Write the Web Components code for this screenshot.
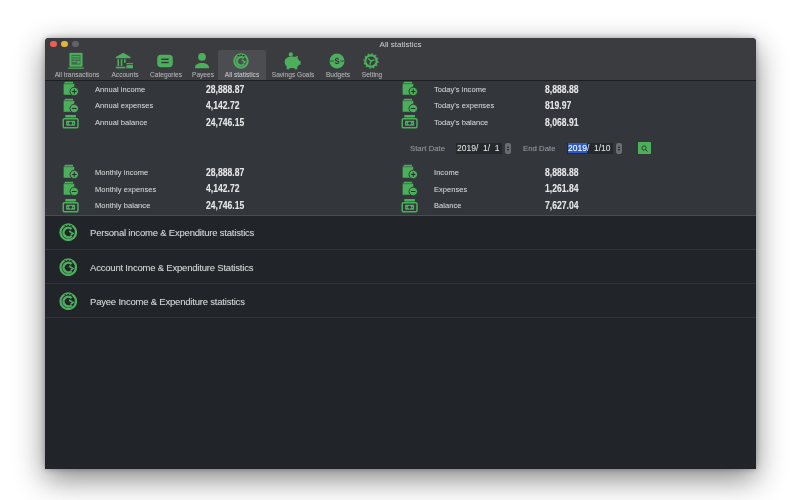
<!DOCTYPE html>
<html><head><meta charset="utf-8"><title>All statistics</title>
<style>
html,body{margin:0;height:100%;background:#fff;overflow:hidden}
body{box-sizing:border-box;padding:38px 44px 31px 45px;display:flex;font-family:"Liberation Sans",Arial,sans-serif}
x-window{flex:1}
</style></head><body>
<x-window>
  <x-toolbar slot="toolbar">
    <x-tool icon="ledger" w="48">All transactions</x-tool>
    <x-tool icon="bank" w="48">Accounts</x-tool>
    <x-tool icon="tag" w="34">Categories</x-tool>
    <x-tool icon="person" w="30" style="margin-left:5px">Payees</x-tool>
    <x-tool icon="stats" w="48" size="16" active>All statistics</x-tool>
    <x-tool icon="pig" w="54">Savings Goals</x-tool>
    <x-tool icon="budget" w="36" size="16">Budgets</x-tool>
    <x-tool icon="gear" w="32" size="16">Setting</x-tool>
  </x-toolbar>
  <x-stats slot="stats">
    <x-stat icon="plus" label="Annual income" value="28,888.87"></x-stat>
    <x-stat icon="plus" label="Today's income" value="8,888.88"></x-stat>
    <x-stat icon="minus" label="Annual expenses" value="4,142.72"></x-stat>
    <x-stat icon="minus" label="Today's expenses" value="819.97"></x-stat>
    <x-stat icon="cash" label="Annual balance" value="24,746.15"></x-stat>
    <x-stat icon="cash" label="Today's balance" value="8,068.91"></x-stat>
    <x-date-range></x-date-range>
    <x-stat icon="plus" label="Monthly income" value="28,888.87"></x-stat>
    <x-stat icon="plus" label="Income" value="8,888.88"></x-stat>
    <x-stat icon="minus" label="Monthly expenses" value="4,142.72"></x-stat>
    <x-stat icon="minus" label="Expenses" value="1,261.84"></x-stat>
    <x-stat icon="cash" label="Monthly balance" value="24,746.15"></x-stat>
    <x-stat icon="cash" label="Balance" value="7,627.04"></x-stat>
  </x-stats>
  <x-row>Personal income &amp; Expenditure statistics</x-row>
  <x-row>Account Income &amp; Expenditure Statistics</x-row>
  <x-row>Payee Income &amp; Expenditure statistics</x-row>
</x-window>
<script>
const G='#4caf5c', D='#33363a';
const ICONS={
 ledger:`<rect x="3" y="1" width="16" height="17" fill="${G}"/><rect x="5.500" y="3.500" width="11" height="12" fill="#3f6f4b"/><rect x="6.500" y="5" width="9" height="1.500" fill="${G}"/><rect x="6.500" y="8" width="9" height="1.200" fill="${G}"/><rect x="6.500" y="11" width="5" height="1.200" fill="${G}"/><rect x="12.500" y="11" width="3" height="3" fill="${G}"/><rect x="1.500" y="19" width="19" height="1.500" fill="${G}"/>`,
 bank:`<path d="M10 1 1 6v1.500h18V6z" fill="${G}"/><path d="M3 9h2v8H3zM7 9h2v8H7zM11 9h2v4h-2z" fill="${G}"/><rect x="1" y="18" width="12" height="2" fill="${G}"/><rect x="13.500" y="13" width="9" height="7.500" rx="1" fill="${G}" stroke="${D}" stroke-width=".8"/><rect x="13.500" y="15" width="9" height="1" fill="${D}"/>`,
 tag:`<rect x="1.500" y="3.500" width="19" height="15" rx="4.500" fill="${G}"/><rect x="6.500" y="8" width="9" height="1.700" fill="${D}"/><rect x="6.500" y="12" width="9" height="1.700" fill="${D}"/>`,
 person:`<circle cx="11" cy="6" r="4.700" fill="${G}"/><path d="M2.500 20v-1.500c0-3 3.500-5 8.500-5s8.500 2 8.500 5V20z" fill="${G}"/>`,
 stats:`<circle cx="11" cy="11" r="9.200" fill="none" stroke="${G}" stroke-width="2.800"/><path d="M15 15.500A5.700 5.700 0 1 1 15 7.300" fill="none" stroke="${G}" stroke-width="3"/><path d="M12 9.500 16.800 12.500 14 14.500" fill="none" stroke="${G}" stroke-width="1.800"/><ellipse cx="7.500" cy="3.400" rx="1.400" ry=".8" fill="#23272b"/><ellipse cx="11" cy="2.800" rx="1.400" ry=".8" fill="#23272b"/><ellipse cx="14.500" cy="3.400" rx="1.400" ry=".8" fill="#23272b"/>`,
 pig:`<path d="M2 12c0-4 4-6.500 9-6.500 1.500 0 2.500.2 3.500.6L18 4.500v3.800c1 .8 1.600 1.700 2 2.700h1.500v4.500H19.500c-.5 1-1.200 1.600-2 2.200V21h-3.500v-1.500H8V21H4.500v-3.500C3 16.500 2 14.500 2 12z" fill="${G}"/><circle cx="9.500" cy="3" r="2.600" fill="${G}"/>`,
 budget:`<circle cx="11" cy="11" r="10.300" fill="${G}"/><path d="M1 11h5.500M15.500 11h5.500" stroke="${D}" stroke-width="1.100"/><text x="11" y="15.500" text-anchor="middle" font-family="Liberation Sans" font-weight="700" font-size="12.500" fill="${D}">$</text>`,
 gear:`<circle cx="11" cy="11" r="7.800" fill="none" stroke="${G}" stroke-width="3"/><circle cx="11" cy="11" r="9.700" fill="none" stroke="${G}" stroke-width="1.600" stroke-dasharray="2.500 2.580"/><path d="M11 11l5-1.500M11 11 7 7.500M11 11l-1.500 5" stroke="${G}" stroke-width="2" fill="none"/>`,
 plus:`<path d="M2 4.500 4 2h9.500v2.500H15V12h-3v6H2z" fill="${G}"/><path d="M2 4.500h11.500" stroke="${D}" stroke-width=".6"/><circle cx="15" cy="14" r="5.200" fill="${G}" stroke="${D}" stroke-width="1.200"/><path d="M12.300 14h5.400M15 11.300v5.400" stroke="#26302a" stroke-width="1.300"/>`,
 minus:`<path d="M2 4.500 4 2h9.500v2.500H15V12h-3v6H2z" fill="${G}"/><path d="M2 4.500h11.500" stroke="${D}" stroke-width=".6"/><circle cx="15" cy="14" r="5.200" fill="${G}" stroke="${D}" stroke-width="1.200"/><path d="M12.300 14h5.400" stroke="#26302a" stroke-width="1.300"/>`,
 cash:`<path d="M4 2.500h13v3H4z" fill="${G}"/><rect x="1.500" y="7" width="18" height="11" rx="1.500" fill="none" stroke="${G}" stroke-width="1.800"/><rect x="5" y="9.500" width="11" height="6" fill="${G}"/><circle cx="10.500" cy="12.500" r="1.800" fill="${D}"/><circle cx="7" cy="12.500" r=".7" fill="${D}"/><circle cx="14" cy="12.500" r=".7" fill="${D}"/>`,
 search:`<circle cx="10" cy="10" r="4.300" fill="none" stroke="#1f3a25" stroke-width="1.700"/><path d="M13 13l4 4" stroke="#1f3a25" stroke-width="1.900"/>`
};
const svg=(n,s,vb=22)=>`<svg width="${s}" height="${s}" viewBox="0 0 ${vb} ${vb}" style="display:block">${ICONS[n]}</svg>`;
function def(name,css,html){
  customElements.define(name,class extends HTMLElement{
    connectedCallback(){
      if(this.shadowRoot)return;
      const r=this.attachShadow({mode:'open'});
      r.innerHTML=`<style>${css}</style>`+(typeof html==='function'?html(this):html);
    }
  });
}
def('x-window',`
 :host{display:flex;flex-direction:column;background:#212529;border-radius:4px 4px 0 0;overflow:hidden;box-shadow:0 10px 30px rgba(0,0,0,.48),0 0 6px rgba(0,0,0,.3);color:#d8d9da;font-family:"Liberation Sans",Arial,sans-serif;filter:blur(.25px);text-shadow:0 0 .8px rgba(210,212,214,.45)}
 .bar{height:12px;background:#3a3c40;display:flex;align-items:center;padding:0 0 0 5px;position:relative;flex:none}
 .l{width:6.500px;height:6.500px;border-radius:50%;margin-right:4.500px}
 .t{position:absolute;left:0;right:0;top:1.500px;text-align:center;font-size:8px;line-height:9px;color:#b9babc}
`,`<div class="bar"><span class="l" style="background:#ed5f55"></span><span class="l" style="background:#e3b53a"></span><span class="l" style="background:#606265"></span><span class="t">All statistics</span></div>
 <slot name="toolbar"></slot><slot name="stats"></slot><slot></slot>`);
def('x-toolbar',`:host{display:flex;height:30px;padding:0 0 0 8px;background:#3a3c40;border-bottom:1px solid #1c1e20;flex:none}`,`<slot></slot>`);
def('x-tool',`
 :host{display:flex;flex-direction:column;align-items:center;flex:none;height:30px;color:#a3a5a7;font-size:6.600px;white-space:nowrap}
 :host([active]){background:#4b4d51;color:#bbbcbe;border-radius:2px 2px 0 0}
 .i{height:20px;box-sizing:border-box;margin-right:3px;display:flex;align-items:center;padding-top:1px}
 .s{line-height:9px;margin-top:0}
`,h=>{h.style.width=h.getAttribute('w')+'px';return `<div class="i">${svg(h.getAttribute('icon'),+h.getAttribute('size')||18)}</div><div class="s"><slot></slot></div>`});
def('x-stats',`:host{display:grid;grid-template-columns:339px 1fr;grid-auto-rows:16.670px;background:#33363a;height:133.500px;padding:0 0 0 16px;border-bottom:1px solid #4a4c50;flex:none;box-sizing:content-box;align-content:start;overflow:hidden}
 ::slotted(x-date-range){grid-column:1 / -1;height:33px;grid-row:span 2}
`,`<slot></slot>`);
def('x-stat',`
 :host{display:grid;grid-template-columns:34px 111px auto;align-items:center;height:16.670px;white-space:nowrap}
 .i{margin-top:-1px;margin-left:1px}
 .a{font-size:7.500px;color:#c8c9cb;letter-spacing:.05px;margin-top:-.5px}
 .v{font-size:10.500px;font-weight:700;color:#e4e4e5;margin-top:-2px;transform:scaleX(.82);transform-origin:left center}
`,h=>`<div class="i">${svg(h.getAttribute('icon'),18)}</div><div class="a">${h.getAttribute('label')}</div><div class="v">${h.getAttribute('value')}</div>`);
def('x-date-range',`
 :host{display:flex;align-items:center;padding:2px 0 0 349px;font-size:7.800px;color:#85878a;white-space:nowrap;height:33px;box-sizing:border-box}
 .g{width:46px}.f{display:flex;align-items:center;width:46px;height:11px;background:#26292c;color:#dcdcdd;font-size:8.500px;margin-right:3px;padding-left:1px;box-sizing:border-box}
 .f span{white-space:pre}
 .sel{background:#2a5bc8;color:#fff}
 .st{width:6px;height:11px;background:#6a6c70;border-radius:2px;display:flex;flex-direction:column;align-items:center;justify-content:center;gap:1.500px}
 .st i{display:block;width:0;height:0;border:1.800px solid transparent}
 .st .u{border-bottom:2.200px solid #1d1f21;border-top:0}.st .d{border-top:2.200px solid #1d1f21;border-bottom:0}
 .e{width:44px;margin-left:12px}
 .b{width:12.500px;height:12px;background:#4caf5c;border-radius:1px;margin-left:16px;display:flex;align-items:center;justify-content:center}
`,`<span class="g">Start Date</span><span class="f"><span>2019/  1/  1</span></span><span class="st"><i class="u"></i><i class="d"></i></span>
 <span class="e">End Date</span><span class="f"><span class="sel">2019</span><span>/  1/10</span></span><span class="st"><i class="u"></i><i class="d"></i></span>
 <span class="b">${svg('search',11)}</span>`);
def('x-row',`
 :host{display:flex;align-items:center;height:34.300px;padding:1px 0 0 14px;border-bottom:1px solid #303438;box-sizing:border-box;font-size:9.500px;letter-spacing:-.2px;color:#cfd0d1;flex:none;gap:12.500px;white-space:nowrap}
 span{margin-top:.5px}
`,`${svg('stats',18.500)}<span><slot></slot></span>`);
</script>
</body></html>
